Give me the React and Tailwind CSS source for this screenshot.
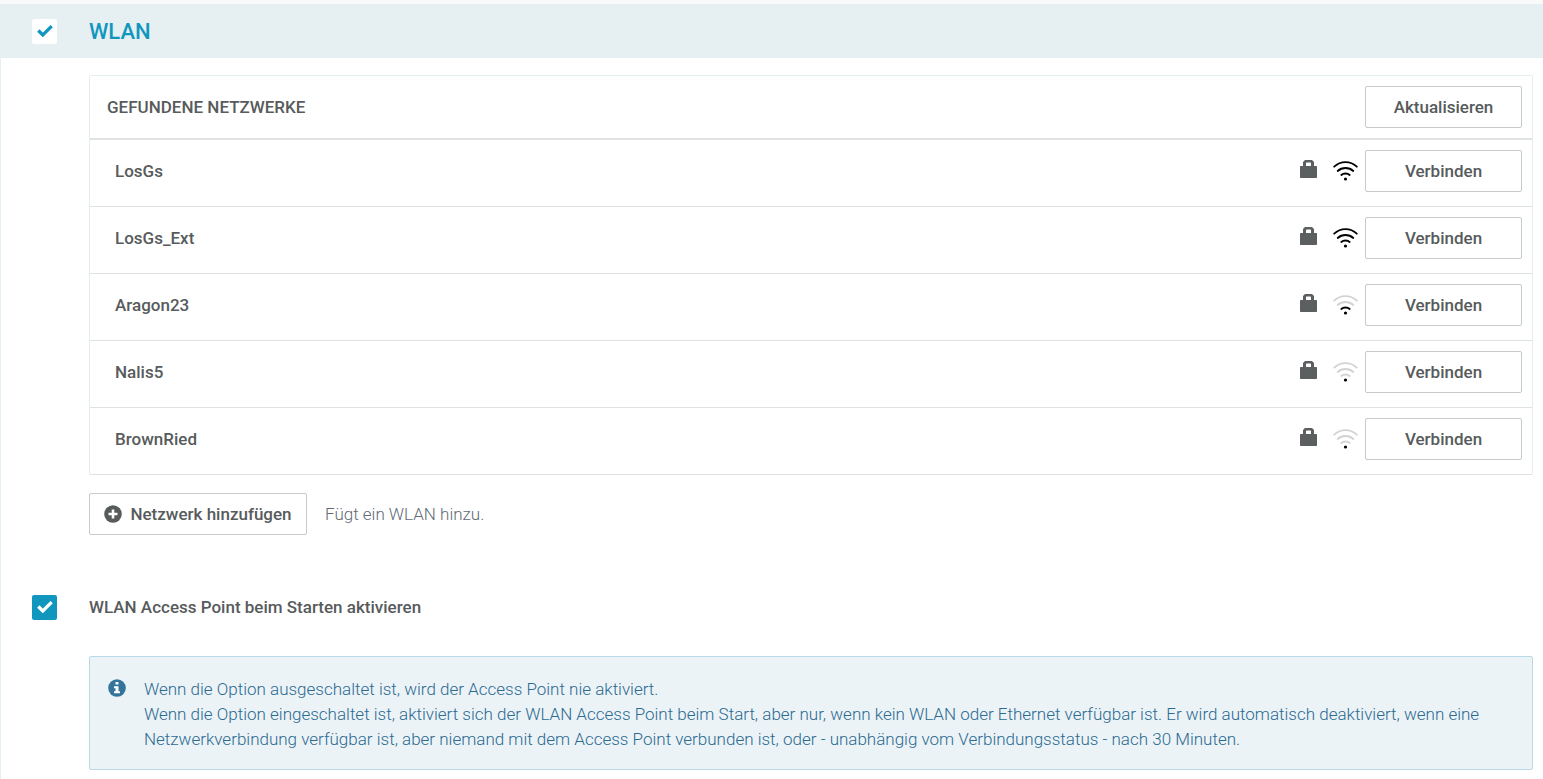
import React, { useState } from 'react';

const initialNetworks = [
    { ssid: 'LosGs', signal: 3 },
    { ssid: 'LosGs_Ext', signal: 3 },
    { ssid: 'Aragon23', signal: 1 },
    { ssid: 'Nalis5', signal: 0 },
    { ssid: 'BrownRied', signal: 0 },
];

const buttonClass = 'h-[42px] rounded-xs border border-[#c9cbcb] bg-white font-medium text-[#575b5c] hover:bg-gray-50';

const LockIcon = () => (
    <svg width="17" height="18" viewBox="0 0 17 18" fill="#5b5f60" role="img" aria-label="Verschlüsselt">
        <path fillRule="evenodd" d="M3 6V2L5 0h7l2 2v4h2.400l.6.6v10.800l-.6.6H.6l-.6-.6V6.600L.6 6zM6 6h5V3l-.6-.6H6.600L6 3z" />
    </svg>
);

// signal: 0 (nur Punkt) bis 3 (alle Bögen)
const WifiIcon = ({ signal }) => {
    const color = (level) => (signal >= level ? '#000' : '#d3d3d3');

    return (
        <svg width="25" height="22" viewBox="0 0 25 22" fill="none" strokeWidth="1.8" strokeLinecap="round" role="img" aria-label={`Signalstärke ${signal}`}>
            <path d="M1.2 6.7C7.5.5 17.500.5 23.800 6.700" stroke={color(3)} />
            <path d="M4.700 11C9 7 16 7 20.300 11" stroke={color(2)} />
            <path d="M8.300 15C10.500 13 14.500 13 16.700 15" stroke={color(1)} />
            <circle cx="12.5" cy="19" r="1.6" fill="#000" />
        </svg>
    );
};

const PlusCircleIcon = () => (
    <svg width="18" height="18" viewBox="0 0 18 18" aria-hidden="true">
        <circle cx="9" cy="9" r="8.8" fill="#575b5c" />
        <path d="M9 4.500v9M4.500 9h9" stroke="#fff" strokeWidth="2.6" />
    </svg>
);

const InfoCircleIcon = () => (
    <svg width="18" height="18" viewBox="0 0 18 18" aria-hidden="true">
        <circle cx="9" cy="9" r="8.8" fill="#35749a" />
        <path d="M7.500 3h3v2.500h-3zM6 7.200h4.500v5H12v2H6v-2h1.500v-3H6z" fill="#fff" />
    </svg>
);

const Checkbox = ({ id, checked, onChange, light }) => (
    <span className="grid size-[25px] shrink-0 place-items-center">
        <input type="checkbox" id={id} checked={checked} onChange={(e) => onChange(e.target.checked)}
            className={`col-start-1 row-start-1 size-[25px] appearance-none rounded-xs ${light ? 'bg-white' : 'bg-[#1197be]'}`} />
        {checked && (
            <svg width="25" height="25" viewBox="0 0 25 25" fill="none" stroke={light ? '#1197be' : '#fff'} strokeWidth="3.2" className="pointer-events-none col-start-1 row-start-1">
                <path d="M6.300 11.500l4.500 4.500 8.900-8.900" />
            </svg>
        )}
    </span>
);

const NetworkTable = ({ networks }) => (
    <div className="overflow-hidden rounded-xs border border-[#e4eef0] border-b-[#dfe2e2]">
        <table className="w-full">
            <thead>
                <tr className="border-b-2 border-[#e0e2e2]">
                    <th scope="col" className="py-[10px] pl-[17px] text-left font-medium">GEFUNDENE NETZWERKE</th>
                    <th scope="col" className="w-[220px] py-[10px] pr-[10px] text-right">
                        <button type="button" className={`${buttonClass} w-[157px] align-top`}>Aktualisieren</button>
                    </th>
                </tr>
            </thead>
            <tbody>
                {networks.map((network) => (
                    <tr key={network.ssid} className="border-b border-[#dfe2e2] last:border-b-0">
                        <td className="pt-[10px] pb-[14px] pl-[25px] align-middle font-medium">{network.ssid}</td>
                        <td className="pt-[10px] pr-[10px] pb-[14px]">
                            <div className="flex items-center justify-end">
                                <span className="mr-4 pb-1"><LockIcon /></span>
                                <span className="mr-[7px]"><WifiIcon signal={network.signal} /></span>
                                <button type="button" className={`${buttonClass} w-[157px]`}>Verbinden</button>
                            </div>
                        </td>
                    </tr>
                ))}
            </tbody>
        </table>
    </div>
);

const App = () => {
    const [wlanEnabled, setWlanEnabled] = useState(true);
    const [accessPoint, setAccessPoint] = useState(true);

    return (
        <main className="min-h-screen border-t-4 border-[#f8fafa] bg-white font-['Roboto',sans-serif] text-[17px] leading-[25px] text-[#575b5c]">
            <header className="flex h-[54px] items-center gap-8 bg-[#e6eff2] pl-8">
                <Checkbox id="wlan" checked={wlanEnabled} onChange={setWlanEnabled} light />
                <h2 className="text-[22px] font-medium text-[#1197be]">
                    <label htmlFor="wlan">WLAN</label>
                </h2>
            </header>

            <div className="border-l border-[#e6eff2] pt-[17px] pr-[10px] pb-[9px]">
                <div className="pl-[88px]">
                    <NetworkTable networks={initialNetworks} />

                    <div className="mt-[18px] flex items-center gap-[18px]">
                        <button type="button" className={`${buttonClass} flex w-[218px] items-center justify-center gap-2`}>
                            <PlusCircleIcon />
                            Netzwerk hinzufügen
                        </button>
                        <p className="font-light text-[#5f6b75]">Fügt ein WLAN hinzu.</p>
                    </div>
                </div>

                <div className="mt-[60px] flex items-center gap-8 pl-[31px]">
                    <Checkbox id="access-point" checked={accessPoint} onChange={setAccessPoint} />
                    <label htmlFor="access-point" className="font-medium">WLAN Access Point beim Starten aktivieren</label>
                </div>

                <div className="mt-9 ml-[88px] flex gap-[18px] rounded-xs border border-[#b9d9e8] bg-[#ebf3f7] pt-5 pr-[18px] pb-[17px] pl-[18px] text-[#2b6a91]">
                    <span className="shrink-0 pt-[2px]"><InfoCircleIcon /></span>
                    <p className="font-light">
                        Wenn die Option ausgeschaltet ist, wird der Access Point nie aktiviert.<br />
                        Wenn die Option eingeschaltet ist, aktiviert sich der WLAN Access Point beim Start, aber nur, wenn kein WLAN oder Ethernet verfügbar ist. Er wird automatisch deaktiviert, wenn eine Netzwerkverbindung verfügbar ist, aber niemand mit dem Access Point verbunden ist, oder - unabhängig vom Verbindungsstatus - nach 30 Minuten.
                    </p>
                </div>
            </div>
        </main>
    );
};

export default App;
